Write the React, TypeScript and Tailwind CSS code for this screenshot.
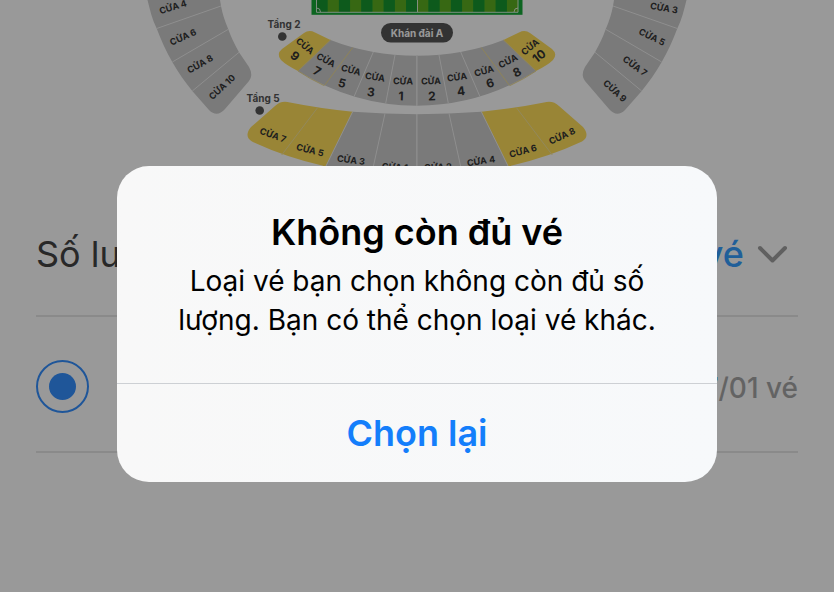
const gates = [
  { label: "CỬA 4", x: 173, y: 7, r: -17 },
  { label: "CỬA 6", x: 183, y: 37, r: -24 },
  { label: "CỬA 8", x: 200, y: 64, r: -30 },
  { label: "CỬA 10", x: 222, y: 87, r: -43 },
  { label: "CỬA 3", x: 664, y: 8, r: 10 },
  { label: "CỬA 5", x: 652, y: 37, r: 26 },
  { label: "CỬA 7", x: 635, y: 66, r: 36 },
  { label: "CỬA 9", x: 615, y: 91, r: 42 },
  { label: "CỬA 7", x: 273, y: 135, r: 20 },
  { label: "CỬA 5", x: 310, y: 150, r: 14 },
  { label: "CỬA 3", x: 351, y: 160, r: 7 },
  { label: "CỬA 1", x: 395, y: 167, r: 3 },
  { label: "CỬA 2", x: 438, y: 167, r: -2 },
  { label: "CỬA 4", x: 481, y: 161, r: -8 },
  { label: "CỬA 6", x: 523, y: 151, r: -15 },
  { label: "CỬA 8", x: 562, y: 136, r: -25 },
];

// second tier: the word and the number sit on two lines
const innerGates = [
  { num: "9", x: 305, y: 46, nx: 295, ny: 56, r: 40 },
  { num: "7", x: 326, y: 60, nx: 317, ny: 71, r: 28 },
  { num: "5", x: 351, y: 70, nx: 342, ny: 83, r: 15 },
  { num: "3", x: 375, y: 77, nx: 371, ny: 92, r: 8 },
  { num: "1", x: 403, y: 81, nx: 401, ny: 96, r: 2 },
  { num: "2", x: 431, y: 81, nx: 432, ny: 96, r: -2 },
  { num: "4", x: 457, y: 77, nx: 461, ny: 91, r: -7 },
  { num: "6", x: 484, y: 71, nx: 490, ny: 83, r: -16 },
  { num: "8", x: 508, y: 61, nx: 517, ny: 72, r: -27 },
  { num: "10", x: 530, y: 47, nx: 539, ny: 56, r: -38 },
];

const stripes = Array.from({ length: 18 }, (_, i) => i);

// Left half of the stands, the right half is its mirror
function HalfStand() {
  return (
    <g>
      <g fill="#cbcbcb">
        <path d="M147.500 0C150 10 152 19 156.700 28.500C161 40 166 51 172.300 62C178 72 185 82 192.300 91L209 110Q217 118 225 109L249 81Q253.500 75 249 67L239 52.300Q232 40 228.300 29.300Q223 17 221 6L220 0Z" />
        <path d="M330.500 40Q370 55.500 417 55.700V105.700Q354 105.700 298 71Z" />
        <path d="M352.700 111.700Q385 114 417 114.300V172H323Z" />
      </g>
      <g fill="#ffde5a">
        <path d="M330.500 40L315 32.500Q309 29.500 304 33L282 49Q276 54 281 60Q286 65 298 71Z" />
        <path d="M352.700 111.700Q320 108.500 290 102.500Q281 100 275 106L251 127Q243.500 136 252 141.500Q285 157 323 165.700L323 172Z" />
      </g>
      <g stroke="#eeeeee" strokeWidth="1" fill="none">
        <path d="M156.700 28.500L221 6M172.300 62L228.300 29.300M192.300 91L239 52.300" />
        <path d="M373.300 52L354 96.700M395 55L385.700 103.300M417 55V106" />
        <path d="M385 113.500L373 168M417 114V172M352.700 111.700L325 168" />
        <path d="M317.700 107.500L281.700 155" stroke="#f5e49a" />
        <path d="M352.700 47.500L324.500 85.500M330.500 40L298 71Q310 79 324 85.500" stroke="#eddb94" />
      </g>
    </g>
  );
}

function StadiumMap() {
  return (
    <svg viewBox="0 0 834 193" className="block w-full font-['Inter',sans-serif] font-bold">
      <rect x="311.500" y="-20" width="211" height="34.800" fill="#16a838" />
      {stripes.map((i) => (
        <rect
          key={i}
          x={316.5 + i * 11.2}
          y="-20"
          width="11.300"
          height="32"
          fill={i % 2 === 0 ? "#16962f" : "#5cad20"}
        />
      ))}
      <g fill="none" stroke="#ffffff" strokeWidth="1" opacity="0.8">
        <path d="M316.500 -10V12.300H518V-10M417.500 0V12" />
        <path d="M316.500 8A4 4 0 0 1 320.500 12M518 8A4 4 0 0 0 514 12" />
      </g>

      <HalfStand />
      <g transform="matrix(-1 0 0 1 834 0)">
        <HalfStand />
      </g>

      <rect x="381" y="23" width="72" height="19.500" rx="9.700" fill="#555555" />
      <text x="417" y="33" dy="0.36em" textAnchor="middle" fontSize="10" fill="#ffffff">
        Khán đài A
      </text>

      <g fill="#555555">
        <circle cx="282.300" cy="36.500" r="4.300" />
        <circle cx="259.700" cy="110.500" r="4.300" />
        <text x="284" y="24" dy="0.36em" textAnchor="middle" fontSize="10">
          Tầng 2
        </text>
        <text x="263" y="98" dy="0.36em" textAnchor="middle" fontSize="10">
          Tầng 5
        </text>
      </g>

      <g fill="#333333" textAnchor="middle">
        {gates.map((g, i) => (
          <text key={i} dy="0.36em" fontSize="9" transform={`translate(${g.x} ${g.y}) rotate(${g.r})`}>
            {g.label}
          </text>
        ))}
        {innerGates.map((g) => (
          <g key={g.num}>
            <text dy="0.36em" fontSize="9" transform={`translate(${g.x} ${g.y}) rotate(${g.r})`}>
              CỬA
            </text>
            <text dy="0.36em" fontSize="12" transform={`translate(${g.nx} ${g.ny}) rotate(${g.r})`}>
              {g.num}
            </text>
          </g>
        ))}
      </g>
    </svg>
  );
}

export default function App() {
  return (
    <div className="min-h-screen bg-white pr-0.5 font-['Inter',sans-serif]">
      <div className="relative min-h-screen overflow-hidden bg-white">
        <StadiumMap />

        <main className="px-9">
          {/* Quantity */}
          <div className="flex h-[124px] items-center justify-between border-b-2 border-[#e6e6e6]">
            <label htmlFor="quantity" className="text-[36px] leading-[44px] text-[#444444]">
              Số lượng
            </label>
            <div className="flex items-center gap-3">
              <select
                id="quantity"
                className="appearance-none bg-transparent text-[36px] leading-[44px] font-medium text-[#369fff] [text-align-last:right]"
              >
                <option>01 vé</option>
              </select>
              <svg viewBox="0 0 32 20" className="mr-2.5 h-5 w-8" fill="none">
                <path
                  d="M4 4L16.500 16.500L29 4"
                  stroke="#a0a0a0"
                  strokeWidth="4"
                  strokeLinecap="round"
                  strokeLinejoin="round"
                />
              </svg>
            </div>
          </div>

          {/* Ticket type */}
          <div className="flex h-[136px] items-center justify-between border-b-2 border-[#e6e6e6] pt-1">
            <input
              type="radio"
              name="ticket"
              defaultChecked
              aria-label="Loại vé"
              className="size-[53px] appearance-none rounded-full border-2 border-[#348fff] p-[11px] before:block before:size-full before:rounded-full before:bg-[#348fff]"
            />
            <p className="pt-1 text-[28px] leading-9 font-medium text-[#a6a6a6]">
              <span className="text-[#348fff]">7</span>/01 vé
            </p>
          </div>
        </main>

        {/* Alert */}
        <div className="absolute inset-0 flex items-start justify-center bg-black/40 px-6 pt-[166px]">
          <div
            role="alertdialog"
            aria-labelledby="alert-title"
            aria-describedby="alert-text"
            className="w-full max-w-[600px] overflow-hidden rounded-[32px] bg-linear-to-r from-[#f8f8f8] to-[#f7f9fb] text-center text-black"
          >
            <div className="px-12 pt-11 pb-[43px]">
              <h2 id="alert-title" className="text-[36px] leading-[44px] font-semibold">
                Không còn đủ vé
              </h2>
              <p id="alert-text" className="mt-2 text-[28px] leading-[39px]">
                Loại vé bạn chọn không còn đủ số lượng. Bạn có thể chọn loại vé khác.
              </p>
            </div>
            <button className="block h-[99px] w-full border-t border-[#cdd0d4] text-[36px] leading-[44px] font-semibold text-[#147efb]">
              Chọn lại
            </button>
          </div>
        </div>
      </div>
    </div>
  );
}
